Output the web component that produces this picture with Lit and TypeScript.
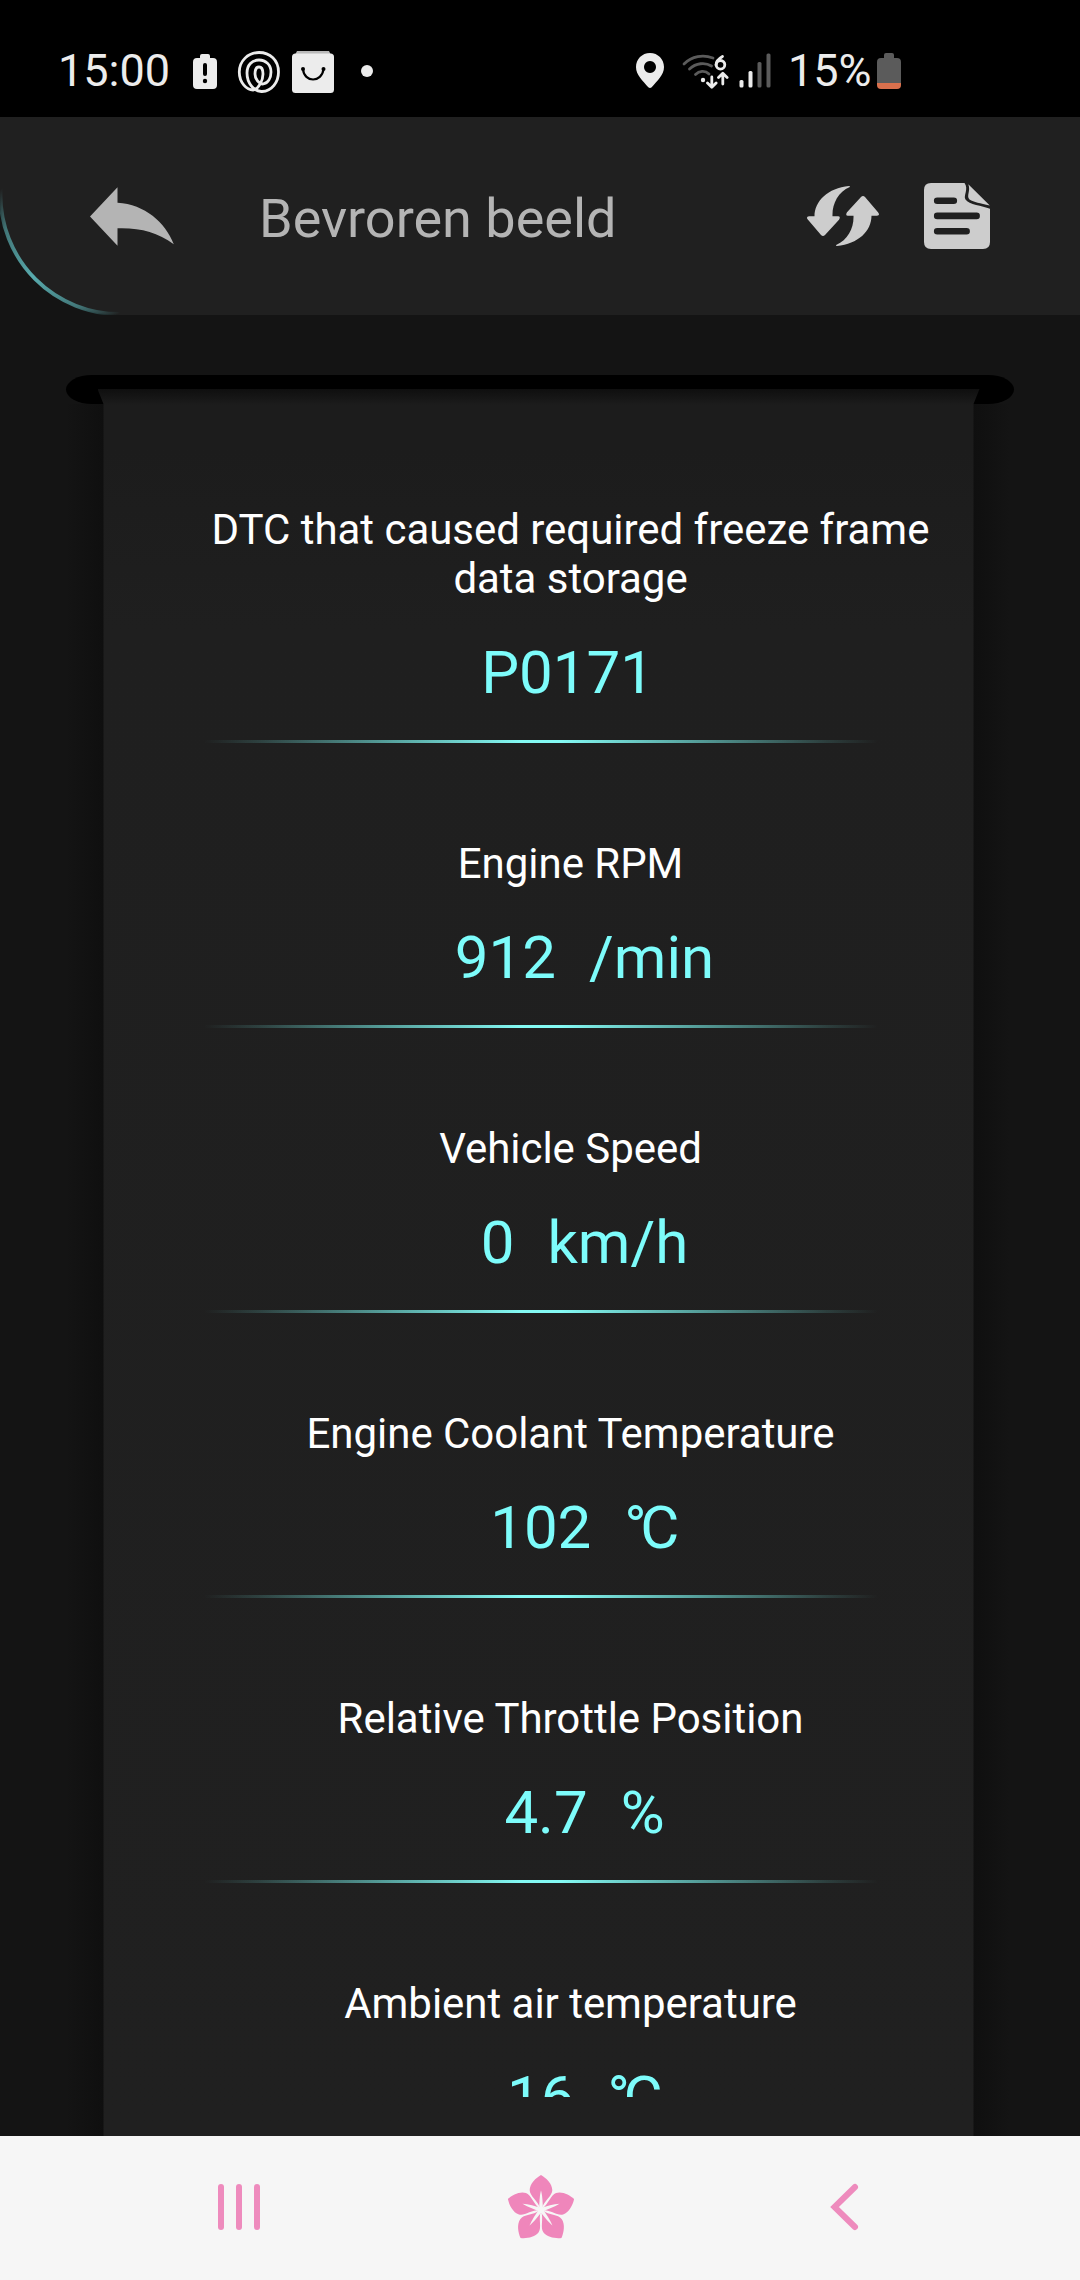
import { LitElement, html, css, svg } from "lit";
import { customElement, property } from "lit/decorators.js";

interface Reading {
  label: string;
  value: string;
  unit?: string;
}

const READINGS: Reading[] = [
  { label: "DTC that caused required freeze frame data storage", value: "P0171" },
  { label: "Engine RPM", value: "912", unit: "/min" },
  { label: "Vehicle Speed", value: "0", unit: "km/h" },
  { label: "Engine Coolant Temperature", value: "102", unit: "°C" },
  { label: "Relative Throttle Position", value: "4.7", unit: "%" },
  { label: "Ambient air temperature", value: "16", unit: "°C" },
];

@customElement("status-bar")
class StatusBar extends LitElement {
  static styles = css`
    :host {
      display: flex;
      box-sizing: border-box;
      height: 117px;
      padding: 45px 0 0 58px;
      background: #000;
      color: #ececec;
      font: 45px/51px Roboto, sans-serif;
    }
    svg { display: block; height: 50px; flex: none; fill: #ececec; }
    .clock { width: 114px; white-space: nowrap; }
    .alert { width: 24px; margin-left: 21px; }
    .rings { width: 44px; margin-left: 20px; }
    .bag { width: 42px; margin-left: 11px; }
    .dot { width: 12px; margin-left: 27px; }
    .pin { width: 28px; margin-left: 263px; }
    .wifi { width: 48px; margin-left: 17px; }
    .signal { width: 33px; margin-left: 10px; }
    .percent { width: 85px; margin-left: 16px; white-space: nowrap; }
    .battery { width: 24px; margin-left: 4px; }
  `;

  render() {
    return html`
      <span class="clock">15:00</span>
      <svg class="alert" viewBox="193 45 24 50">
        <path d="M200 58v-2q0-2 2-2h6q2 0 2 2v2h3q4 0 4 4v23q0 4-4 4h-16q-4 0-4-4v-23q0-4 4-4z" />
        <rect x="203" y="63" width="4" height="13" rx="2" fill="#000" />
        <circle cx="205" cy="81" r="2.2" fill="#000" />
      </svg>
      <svg class="rings" viewBox="237 45 44 50">
        <g fill="none" stroke="#ececec" stroke-width="2.8">
          <path d="M262 91.5C272 91 278.5 82 278.5 72C278.5 60 270 52.5 259 52.5S239.300 61 239.300 72S247 90 253 90C259 89 263 80 263 74C263 69 261 67 259 67S255 69 255 74C255 79 259 84 263 84C268 83 271 78 271 72C271 65 266 60 259 60S247 65 247 73C247 83 254 92 262 91.500z" />
        </g>
      </svg>
      <svg class="bag" viewBox="292 45 42 50">
        <path d="M297 51h32l2 4h-36z" fill="#b9b9b9" />
        <rect x="292" y="53.500" width="42" height="39.500" rx="3.500" />
        <path d="M303 69C304 83 322 83 323.500 69" fill="none" stroke="#000" stroke-width="2.200" />
        <circle cx="303" cy="69" r="2" fill="#000" />
        <circle cx="323.500" cy="69" r="2" fill="#000" />
      </svg>
      <svg class="dot" viewBox="361 45 12 50"><circle cx="367" cy="71" r="6" /></svg>
      <svg class="pin" viewBox="636 45 28 50">
        <path fill-rule="evenodd" d="M650 53c8 0 14 6.300 14 14c0 8-7 14-12.300 20.300q-1.700 1.600-3.400 0C643 81 636 75 636 67c0-7.700 6-14 14-14zM650 61a6 6 0 1 0 .01 0z" />
      </svg>
      <svg class="wifi" viewBox="681 45 48 50">
        <g fill="none" stroke="#5b5b5b" stroke-width="2.800" stroke-linecap="round">
          <path d="M684 64C692 56 703 54.500 713 58" />
          <path d="M689.500 69C696 63 705 62 711.500 66" />
          <path d="M695.500 74.500C699 71 705 70 709 74" />
        </g>
        <circle cx="703" cy="80" r="2.200" />
        <g fill="none" stroke="#ececec" stroke-width="2.800" stroke-linecap="round" stroke-linejoin="round">
          <path d="M722.500 56.500C719 58.500 716 61.500 716 65" />
          <circle cx="720.500" cy="64.800" r="4.300" />
          <path d="M711.800 77v10M707.500 83l4.300 4.300l4.300-4.300M722.800 84v-10M718.500 77.500l4.300-4.300l4.300 4.300" />
        </g>
      </svg>
      <svg class="signal" viewBox="739 45 33 50">
        <rect x="739.500" y="80" width="4" height="7.500" rx="1.500" />
        <rect x="748.500" y="71" width="4" height="16.500" rx="1.500" />
        <rect x="757.500" y="62" width="4" height="25.500" rx="1.500" fill="#5b5b5b" />
        <rect x="766.500" y="53.500" width="4" height="34" rx="1.500" fill="#5b5b5b" />
      </svg>
      <span class="percent">15%</span>
      <svg class="battery" viewBox="877 45 24 50">
        <path d="M884 58v-3q0-2 2-2h6q2 0 2 2v3h3q4 0 4 4v21h-24v-21q0-4 4-4z" fill="#5b5b5b" />
        <path d="M877 83h24v2q0 4-4 4h-16q-4 0-4-4z" fill="#d9704d" />
      </svg>
    `;
  }
}

@customElement("app-toolbar")
class AppToolbar extends LitElement {
  @property() heading = "";

  static styles = css`
    :host {
      display: flex;
      align-items: center;
      position: relative;
      box-sizing: border-box;
      height: 198px;
      padding-left: 88px;
      background: #202020;
      border-bottom-left-radius: 120px;
    }
    .edge { position: absolute; left: 0; bottom: 0; width: 124px; height: 138px; }
    svg { display: block; flex: none; }
    .back { width: 88px; height: 70px; fill: #b4b4b4; }
    h1 {
      width: 547px;
      margin: 5px 0 0 83px;
      color: #b4b4b4;
      font: 400 54px/64px Roboto, sans-serif;
    }
    .refresh { width: 74px; height: 70px; fill: #cdcdcd; }
    .report { width: 68px; height: 70px; margin-left: 43px; fill: #cdcdcd; }
  `;

  render() {
    return html`
      <svg class="edge" viewBox="0 177 124 138">
        <defs>
          <linearGradient id="glow" gradientUnits="userSpaceOnUse" x1="0" y1="190" x2="118" y2="315">
            <stop offset="0" stop-color="#55a5a8" stop-opacity="0" />
            <stop offset=".2" stop-color="#4f9698" stop-opacity=".75" />
            <stop offset=".5" stop-color="#58abae" />
            <stop offset=".8" stop-color="#4f9698" stop-opacity=".75" />
            <stop offset="1" stop-color="#55a5a8" stop-opacity="0" />
          </linearGradient>
        </defs>
        <path d="M.5 186V195A119 119 0 0 0 119.500 314" fill="none" stroke="url(#glow)" stroke-width="3.800" />
      </svg>
      <svg class="back" viewBox="88 180 88 70">
        <path d="M90 215.500L117.500 186.200V201.800C145 203.500 165 221 173.800 243.200C157 231 140 226.500 117.500 227.200V244.800z" />
      </svg>
      <h1>${this.heading}</h1>
      <svg class="refresh" viewBox="806 181 74 70">
        ${[0, 180].map(
          (turn) => svg`<path transform="rotate(${turn} 843 216)"
            d="M849 186C828 188 814.500 201 814.500 216.300H809q-3.500 .5-1 3.500L821 235q2 2 4 0L839 219.800q2-3.500-1-3.500H832.500C832 204 838 192 849.800 187q.8-1-.8-1z" />`,
        )}
      </svg>
      <svg class="report" viewBox="923 181 68 70">
        <path fill-rule="evenodd" d="M931 183H964.500C969 189 963 196 965.500 199.500C969 205 982 205.500 990 208.800V242q0 7-7 7H931q-7 0-7-7V190q0-7 7-7z
          M937.200 197.500a3.300 3.300 0 0 0 0 6.600h16.600a3.300 3.300 0 0 0 0-6.600z
          M937.200 212.600a3.300 3.300 0 0 0 0 6.600h39.400a3.300 3.300 0 0 0 0-6.600z
          M937.200 228a3.300 3.300 0 0 0 0 6.600h29.400a3.300 3.300 0 0 0 0-6.600z" />
        <path d="M968.300 184.300L989.800 205.500C980 203 974 202.500 969.500 199.500C966 196 971 191 968.300 184.300z" />
      </svg>
    `;
  }
}

@customElement("reading-row")
class ReadingRow extends LitElement {
  @property({ attribute: false }) reading!: Reading;

  static styles = css`
    :host {
      display: block;
      padding-top: 96px;
      font-family: Roboto, sans-serif;
      text-align: center;
    }
    .text { padding-left: 64px; }
    .label {
      width: 740px;
      margin: 0 auto;
      color: #fff;
      font-size: 42px;
      line-height: 49px;
      letter-spacing: -0.03px;
    }
    .value {
      display: flex;
      justify-content: center;
      gap: 33px;
      margin-top: 35px;
      height: 70px;
      color: #7dfcfb;
      font-size: 60px;
      line-height: 70px;
      white-space: nowrap;
    }
    .value.code { padding-right: 6px; }
    .value.measured { padding-left: 28px; }
    .degrees { margin-right: 6px; letter-spacing: -6.500px; }
    .rule {
      width: 674px;
      height: 3px;
      margin: 32px 0 0 100px;
      background: linear-gradient(90deg, #7dfcf500 0, #7dfcf526 8%, #7dfcf599 28%, #84faf4 47%, #84faf4 53%, #7dfcf599 72%, #7dfcf526 92%, #7dfcf500 100%);
    }
  `;

  render() {
    const { label, value, unit } = this.reading;
    const unitClass = unit?.startsWith("°") ? "degrees" : "unit";
    return html`
      <div class="text">
        <div class="label">${label}</div>
        <div class="value ${unit ? "measured" : "code"}">
          <span>${value}</span>${unit ? html`<span class=${unitClass}>${unit}</span>` : null}
        </div>
      </div>
      <div class="rule"></div>
    `;
  }
}

@customElement("nav-bar")
class NavBar extends LitElement {
  static styles = css`
    :host {
      display: flex;
      align-items: center;
      box-sizing: border-box;
      height: 144px;
      padding-left: 218px;
      background: #f6f6f6;
    }
    svg { display: block; flex: none; height: 70px; }
    .recents { width: 42px; fill: #ee8bbd; }
    .home { width: 70px; margin-left: 246px; }
    .back { width: 30px; margin-left: 254px; }
  `;

  render() {
    return html`
      <svg class="recents" viewBox="218 2173 42 70">
        ${[218, 236, 254].map((x) => svg`<rect x=${x} y="2184" width="6" height="46" rx="3" />`)}
      </svg>
      <svg class="home" viewBox="506 2173 70 70">
        ${[0, 72, 144, 216, 288].map(
          (turn) => svg`<g transform="translate(541 2209.800) rotate(${turn})">
            <path fill="#ef86bb" d="M0-34.800C-5-32-11.300-26-11.300-19.500C-11.300-14-3.200-9-.8-1.500H.8C3.200-9 11.300-14 11.300-19.500C11.300-26 5-32 0-34.800z" />
            <path fill="#f6f6f6" d="M0-19.500C-1.500-14-1.800-6-1.800 0H1.800C1.800-6 1.500-14 0-19.500z" />
          </g>`,
        )}
        <circle cx="541" cy="2209.800" r="3" fill="#f6f6f6" />
      </svg>
      <svg class="back" viewBox="830 2173 30 70">
        <path d="M855 2187L834.500 2207L855 2227" fill="none" stroke="#ee8bbd" stroke-width="6" stroke-linecap="round" />
      </svg>
    `;
  }
}

@customElement("app-root")
class AppRoot extends LitElement {
  static styles = css`
    :host {
      display: flex;
      flex-direction: column;
      width: 1080px;
      height: 2280px;
      overflow: hidden;
      background: #141414;
    }
    status-bar, app-toolbar, nav-bar { flex: none; }
    main {
      flex: 1;
      min-height: 0;
      display: flex;
      flex-direction: column;
      align-items: center;
      padding-top: 60px;
    }
    .slot {
      flex: none;
      width: 948px;
      height: 29px;
      border-radius: 26px / 14.500px;
      background: #000;
    }
    .shade {
      flex: 1;
      min-height: 0;
      width: 948px;
      margin-top: -15px;
      display: flex;
      justify-content: center;
      background: linear-gradient(90deg, #14141400 0, #0f0f0f 38px, #0f0f0f 906px, #14141400 944px) 0 15px no-repeat;
    }
    .sheet {
      width: 882px;
      margin-right: 3px;
      background: linear-gradient(#0f0f0f 0, #1c1c1c 16px, #1c1c1c 60px, #1f1f1f 240px, #202020 100%);
      clip-path: polygon(0 0, 882px 0, 876px 15px, 876px 100%, 6px 100%, 6px 15px);
    }
    .list {
      box-sizing: border-box;
      width: 870px;
      height: 1708px;
      margin: 0 auto;
      padding-top: 20px;
      overflow: hidden;
    }
  `;

  render() {
    return html`
      <status-bar></status-bar>
      <app-toolbar heading="Bevroren beeld"></app-toolbar>
      <main>
        <div class="slot"></div>
        <div class="shade">
          <div class="sheet">
            <div class="list">
              ${READINGS.map((reading) => html`<reading-row .reading=${reading}></reading-row>`)}
            </div>
          </div>
        </div>
      </main>
      <nav-bar></nav-bar>
    `;
  }
}
